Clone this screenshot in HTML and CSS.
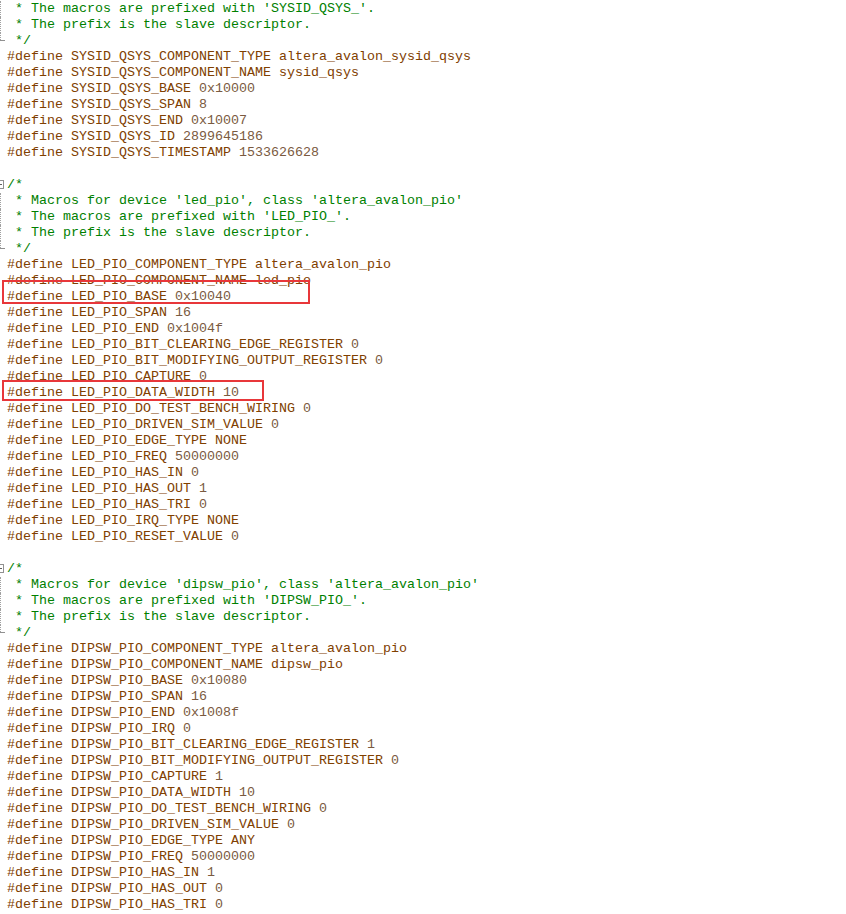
FILE: index.html
```html
<!DOCTYPE html>
<html>
<head>
<meta charset="utf-8">
<link rel="stylesheet" href="styles.css">
</head>
<body>
<div class="editor">
  <div class="line"><span class="g g-mid"></span><span class="c"> * The macros are prefixed with 'SYSID_QSYS_'.</span></div>
  <div class="line"><span class="g g-mid"></span><span class="c"> * The prefix is the slave descriptor.</span></div>
  <div class="line"><span class="g g-end"></span><span class="c"> */</span></div>
  <div class="line"><span class="g"></span><span class="p">#define SYSID_QSYS_COMPONENT_TYPE altera_avalon_sysid_qsys</span></div>
  <div class="line"><span class="g"></span><span class="p">#define SYSID_QSYS_COMPONENT_NAME sysid_qsys</span></div>
  <div class="line"><span class="g"></span><span class="p">#define SYSID_QSYS_BASE <span class="n">0x10000</span></span></div>
  <div class="line"><span class="g"></span><span class="p">#define SYSID_QSYS_SPAN <span class="n">8</span></span></div>
  <div class="line"><span class="g"></span><span class="p">#define SYSID_QSYS_END <span class="n">0x10007</span></span></div>
  <div class="line"><span class="g"></span><span class="p">#define SYSID_QSYS_ID <span class="n">2899645186</span></span></div>
  <div class="line"><span class="g"></span><span class="p">#define SYSID_QSYS_TIMESTAMP <span class="n">1533626628</span></span></div>
  <div class="line"><span class="g"></span><span class="p"></span></div>
  <div class="line"><span class="g g-start"></span><span class="c">/*</span></div>
  <div class="line"><span class="g g-mid"></span><span class="c"> * Macros for device 'led_pio', class 'altera_avalon_pio'</span></div>
  <div class="line"><span class="g g-mid"></span><span class="c"> * The macros are prefixed with 'LED_PIO_'.</span></div>
  <div class="line"><span class="g g-mid"></span><span class="c"> * The prefix is the slave descriptor.</span></div>
  <div class="line"><span class="g g-end"></span><span class="c"> */</span></div>
  <div class="line"><span class="g"></span><span class="p">#define LED_PIO_COMPONENT_TYPE altera_avalon_pio</span></div>
  <div class="line"><span class="g"></span><span class="p">#define LED_PIO_COMPONENT_NAME led_pio</span></div>
  <div class="line"><span class="g"></span><span class="p">#define LED_PIO_BASE <span class="n">0x10040</span></span></div>
  <div class="line"><span class="g"></span><span class="p">#define LED_PIO_SPAN <span class="n">16</span></span></div>
  <div class="line"><span class="g"></span><span class="p">#define LED_PIO_END <span class="n">0x1004f</span></span></div>
  <div class="line"><span class="g"></span><span class="p">#define LED_PIO_BIT_CLEARING_EDGE_REGISTER <span class="n">0</span></span></div>
  <div class="line"><span class="g"></span><span class="p">#define LED_PIO_BIT_MODIFYING_OUTPUT_REGISTER <span class="n">0</span></span></div>
  <div class="line"><span class="g"></span><span class="p">#define LED_PIO_CAPTURE <span class="n">0</span></span></div>
  <div class="line"><span class="g"></span><span class="p">#define LED_PIO_DATA_WIDTH <span class="n">10</span></span></div>
  <div class="line"><span class="g"></span><span class="p">#define LED_PIO_DO_TEST_BENCH_WIRING <span class="n">0</span></span></div>
  <div class="line"><span class="g"></span><span class="p">#define LED_PIO_DRIVEN_SIM_VALUE <span class="n">0</span></span></div>
  <div class="line"><span class="g"></span><span class="p">#define LED_PIO_EDGE_TYPE NONE</span></div>
  <div class="line"><span class="g"></span><span class="p">#define LED_PIO_FREQ <span class="n">50000000</span></span></div>
  <div class="line"><span class="g"></span><span class="p">#define LED_PIO_HAS_IN <span class="n">0</span></span></div>
  <div class="line"><span class="g"></span><span class="p">#define LED_PIO_HAS_OUT <span class="n">1</span></span></div>
  <div class="line"><span class="g"></span><span class="p">#define LED_PIO_HAS_TRI <span class="n">0</span></span></div>
  <div class="line"><span class="g"></span><span class="p">#define LED_PIO_IRQ_TYPE NONE</span></div>
  <div class="line"><span class="g"></span><span class="p">#define LED_PIO_RESET_VALUE <span class="n">0</span></span></div>
  <div class="line"><span class="g"></span><span class="p"></span></div>
  <div class="line"><span class="g g-start"></span><span class="c">/*</span></div>
  <div class="line"><span class="g g-mid"></span><span class="c"> * Macros for device 'dipsw_pio', class 'altera_avalon_pio'</span></div>
  <div class="line"><span class="g g-mid"></span><span class="c"> * The macros are prefixed with 'DIPSW_PIO_'.</span></div>
  <div class="line"><span class="g g-mid"></span><span class="c"> * The prefix is the slave descriptor.</span></div>
  <div class="line"><span class="g g-end"></span><span class="c"> */</span></div>
  <div class="line"><span class="g"></span><span class="p">#define DIPSW_PIO_COMPONENT_TYPE altera_avalon_pio</span></div>
  <div class="line"><span class="g"></span><span class="p">#define DIPSW_PIO_COMPONENT_NAME dipsw_pio</span></div>
  <div class="line"><span class="g"></span><span class="p">#define DIPSW_PIO_BASE <span class="n">0x10080</span></span></div>
  <div class="line"><span class="g"></span><span class="p">#define DIPSW_PIO_SPAN <span class="n">16</span></span></div>
  <div class="line"><span class="g"></span><span class="p">#define DIPSW_PIO_END <span class="n">0x1008f</span></span></div>
  <div class="line"><span class="g"></span><span class="p">#define DIPSW_PIO_IRQ <span class="n">0</span></span></div>
  <div class="line"><span class="g"></span><span class="p">#define DIPSW_PIO_BIT_CLEARING_EDGE_REGISTER <span class="n">1</span></span></div>
  <div class="line"><span class="g"></span><span class="p">#define DIPSW_PIO_BIT_MODIFYING_OUTPUT_REGISTER <span class="n">0</span></span></div>
  <div class="line"><span class="g"></span><span class="p">#define DIPSW_PIO_CAPTURE <span class="n">1</span></span></div>
  <div class="line"><span class="g"></span><span class="p">#define DIPSW_PIO_DATA_WIDTH <span class="n">10</span></span></div>
  <div class="line"><span class="g"></span><span class="p">#define DIPSW_PIO_DO_TEST_BENCH_WIRING <span class="n">0</span></span></div>
  <div class="line"><span class="g"></span><span class="p">#define DIPSW_PIO_DRIVEN_SIM_VALUE <span class="n">0</span></span></div>
  <div class="line"><span class="g"></span><span class="p">#define DIPSW_PIO_EDGE_TYPE ANY</span></div>
  <div class="line"><span class="g"></span><span class="p">#define DIPSW_PIO_FREQ <span class="n">50000000</span></span></div>
  <div class="line"><span class="g"></span><span class="p">#define DIPSW_PIO_HAS_IN <span class="n">1</span></span></div>
  <div class="line"><span class="g"></span><span class="p">#define DIPSW_PIO_HAS_OUT <span class="n">0</span></span></div>
  <div class="line"><span class="g"></span><span class="p">#define DIPSW_PIO_HAS_TRI <span class="n">0</span></span></div>
  <div class="mark mark-base"></div>
  <div class="mark mark-width"></div>
</div>
</body>
</html>
```
FILE: styles.css
```css
html, body {
  margin: 0;
  padding: 0;
  background: #ffffff;
  overflow: hidden;
}
.editor {
  position: relative;
  margin-top: 1px;
  font-family: "Liberation Mono", "Courier New", monospace;
  font-size: 13.333px;
  line-height: 16px;
}
.line {
  display: flex;
  height: 16px;
  white-space: pre;
}
.g {
  position: relative;
  flex: 0 0 7px;
  height: 16px;
}
.g-mid::before,
.g-end::before {
  content: "";
  position: absolute;
  left: 0;
  top: 0;
  height: 16px;
  border-left: 1px dotted #a0a0a0;
}
.g-end::before {
  height: 7px;
}
.g-end::after {
  content: "";
  position: absolute;
  left: 0;
  top: 7px;
  width: 5px;
  border-top: 1px solid #909090;
}
.g-start::before {
  content: "";
  position: absolute;
  left: -5px;
  top: 3px;
  width: 9px;
  height: 9px;
  border: 1px solid #909090;
  background: #fff;
  box-sizing: border-box;
}
.g-start::after {
  content: "";
  position: absolute;
  left: 0;
  top: 7px;
  width: 2px;
  border-top: 1px solid #606060;
}
.c {
  color: #008000;
}
.p {
  color: #804000;
}
.n {
  color: #7a5a40;
}
.mark {
  position: absolute;
  border: 2px solid #e8373a;
  box-sizing: border-box;
}
.mark-base {
  left: 2px;
  top: 279px;
  width: 308px;
  height: 24px;
}
.mark-width {
  left: 2px;
  top: 379px;
  width: 262px;
  height: 21px;
}
```
